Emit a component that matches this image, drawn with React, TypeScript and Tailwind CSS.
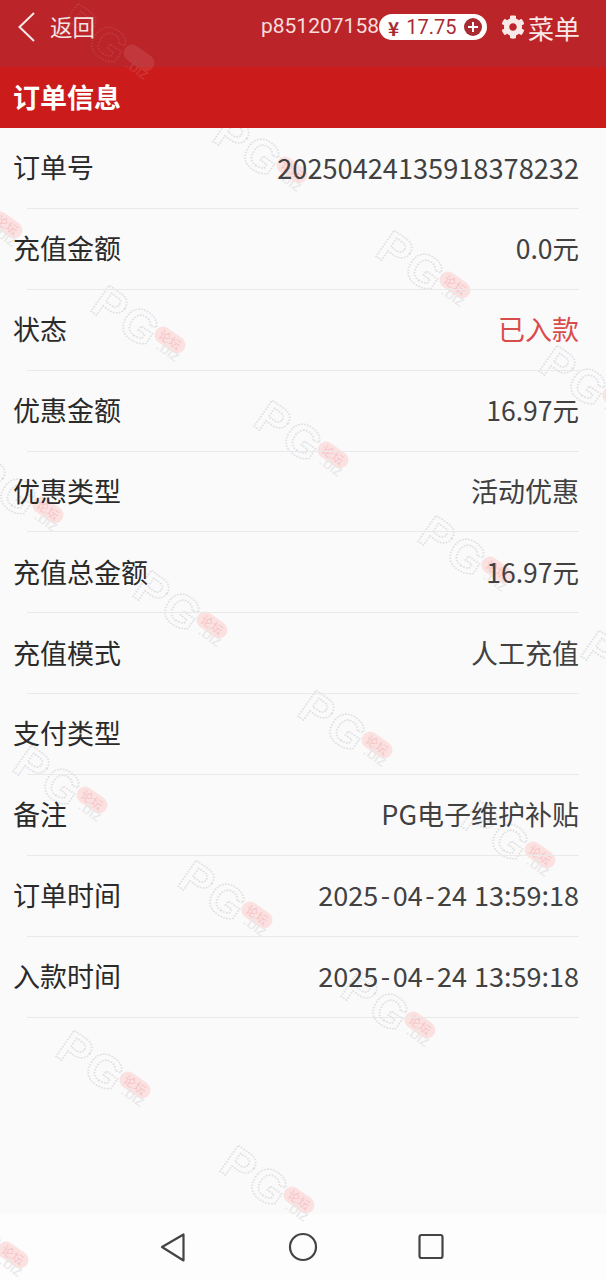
import { FaCog } from 'react-icons/fa';

const rows: { label: string; value: string; red?: boolean; date?: boolean }[] = [
  { label: '订单号', value: '20250424135918378232' },
  { label: '充值金额', value: '0.0元' },
  { label: '状态', value: '已入款', red: true },
  { label: '优惠金额', value: '16.97元' },
  { label: '优惠类型', value: '活动优惠' },
  { label: '充值总金额', value: '16.97元' },
  { label: '充值模式', value: '人工充值' },
  { label: '支付类型', value: '' },
  { label: '备注', value: 'PG电子维护补贴' },
  { label: '订单时间', value: '2025-04-24 13:59:18', date: true },
  { label: '入款时间', value: '2025-04-24 13:59:18', date: true },
];

// watermark tiles, top-left of each stamp
const marks = [
  [215, 120], [378, 235], [541, 350], [-70, 175], [93, 290], [256, 405], [420, 520],
  [583, 635], [-29, 460], [135, 575], [300, 695], [463, 805], [15, 750], [180, 865], [343, 975],
  [58, 1035], [222, 1150], [-64, 1205],
];

function Stamp({ x, y, faint }: { x: number; y: number; faint?: boolean }) {
  return (
    <g transform={`translate(${x} ${y})`} opacity={faint ? 0.12 : 1}>
      <text
        transform="translate(-4.5 19.5) rotate(35)"
        fontFamily="'Liberation Sans', sans-serif"
        fontWeight="700"
        fontSize="46"
        fill="none"
        stroke="#dedee2"
        strokeWidth="1.6"
        strokeDasharray="1.5 1.5"
        letterSpacing="3"
      >
        PG
      </text>
      <g transform="translate(77 50) rotate(35)">
        <rect x="-17" y="-8.5" width="34" height="17" rx="8.5" fill="#fbdcdc" fillOpacity="0.85" />
        <text x="0" y="4.5" textAnchor="middle" fontFamily="'Noto Sans CJK SC', sans-serif" fontSize="12" fill="#f4c4c6">
          论坛
        </text>
      </g>
      <text
        transform="translate(62 58) rotate(35)"
        fontFamily="'Liberation Sans', sans-serif"
        fontSize="16"
        fill="#e8e8e8"
      >
        .biz
      </text>
    </g>
  );
}

function DateText({ value }: { value: string }) {
  const [day, time] = value.split(' ');
  const parts = day.split('-');
  return (
    <span className="[word-spacing:1px]">
      {parts[0]}
      <span className="mx-[2.5px]">-</span>
      {parts[1]}
      <span className="mx-[2.5px]">-</span>
      {parts[2]} {time}
    </span>
  );
}

function valueClass(value: string, red?: boolean) {
  if (red) return 'text-[27px] text-[#d94c4c]';
  // amounts sit a touch narrower than the rest, the order number a touch wider
  if (value.endsWith('元')) return 'text-[26.5px] text-[#414141]';
  if (value.length === 20) return 'text-[27.2px] text-[#414141]';
  return 'text-[27px] text-[#414141]';
}

function Row({ label, value, red, date }: { label: string; value: string; red?: boolean; date?: boolean }) {
  return (
    <div className="h-[80.9px] flex flex-col">
      <div className="flex-1 flex items-center justify-between pl-[13px] pr-[27px] pb-[1px]">
        <span className="text-[27px] text-[#2a2a2a]">{label}</span>
        <span className={valueClass(value, red)}>{date ? <DateText value={value} /> : value}</span>
      </div>
      <div className="mx-[27px] h-px bg-[#e9e9e9]" />
    </div>
  );
}

export default function App() {
  return (
    <div className="relative w-[606px] h-[1280px] overflow-hidden bg-[#fafafa] flex flex-col font-['Noto_Sans_CJK_SC','Noto_Sans',sans-serif]">
      <header className="relative z-10 h-[67px] bg-[#bb2429] flex items-center pl-[18px] pr-[26px] pb-[13px] text-white">
        <svg width="17" height="30" viewBox="0 0 17 30" fill="none" stroke="#f8eaea" strokeWidth="2">
          <path d="M16 1 1.5 15 16 29" />
        </svg>
        <span className="ml-[15px] text-[22.5px] text-[#f6e3e3]">返回</span>
        <span className="ml-auto font-['Roboto',sans-serif] text-[21px] text-[#f6dddd]">p851207158</span>
        <div className="w-[108px] h-[26px] rounded-full bg-white flex items-center pl-[9px] pr-[5px] text-[#a92b31]">
          <span className="text-[19px] font-bold leading-none">¥</span>
          <span className="ml-[7px] font-['Roboto',sans-serif] text-[20px] leading-none">17.75</span>
          <span className="relative ml-auto w-[18px] h-[18px] rounded-full bg-[#a92b31]">
            <span className="absolute left-[4px] top-[8px] w-[10px] h-[2px] bg-white" />
            <span className="absolute left-[8px] top-[4px] w-[2px] h-[10px] bg-white" />
          </span>
        </div>
        <FaCog className="ml-[14px] text-[24px] text-[#f8e8e8]" />
        <span className="ml-[3px] text-[26px] text-[#f8e8e8]">菜单</span>
      </header>

      <div className="relative z-10 h-[61px] bg-[#cb1b1b] flex items-center pl-[13px]">
        <h1 className="text-[27px] font-bold text-white">订单信息</h1>
      </div>

      <main className="relative z-10 flex-1">
        {rows.map((r) => (
          <Row key={r.label} {...r} />
        ))}
      </main>

      <nav className="h-[66px] bg-[#fdfdfd] flex items-center justify-center">
        <svg width="300" height="66" viewBox="0 0 300 66" fill="none" stroke="#444444" strokeWidth="2.2" strokeLinejoin="round">
          <path d="M9 33 30.5 20.5v26z" />
          <circle cx="150" cy="33" r="13" />
          <rect x="266.5" y="21" width="23" height="23" rx="2" />
        </svg>
      </nav>

      <svg className="absolute inset-0 pointer-events-none" width="606" height="1280" viewBox="0 0 606 1280">
        {marks.map(([x, y]) => (
          <Stamp key={`${x}-${y}`} x={x} y={y} />
        ))}
      </svg>
      <svg className="absolute inset-0 z-20 pointer-events-none" width="606" height="130" viewBox="0 0 606 130">
        <Stamp x={62} y={8} faint />
      </svg>
    </div>
  );
}
